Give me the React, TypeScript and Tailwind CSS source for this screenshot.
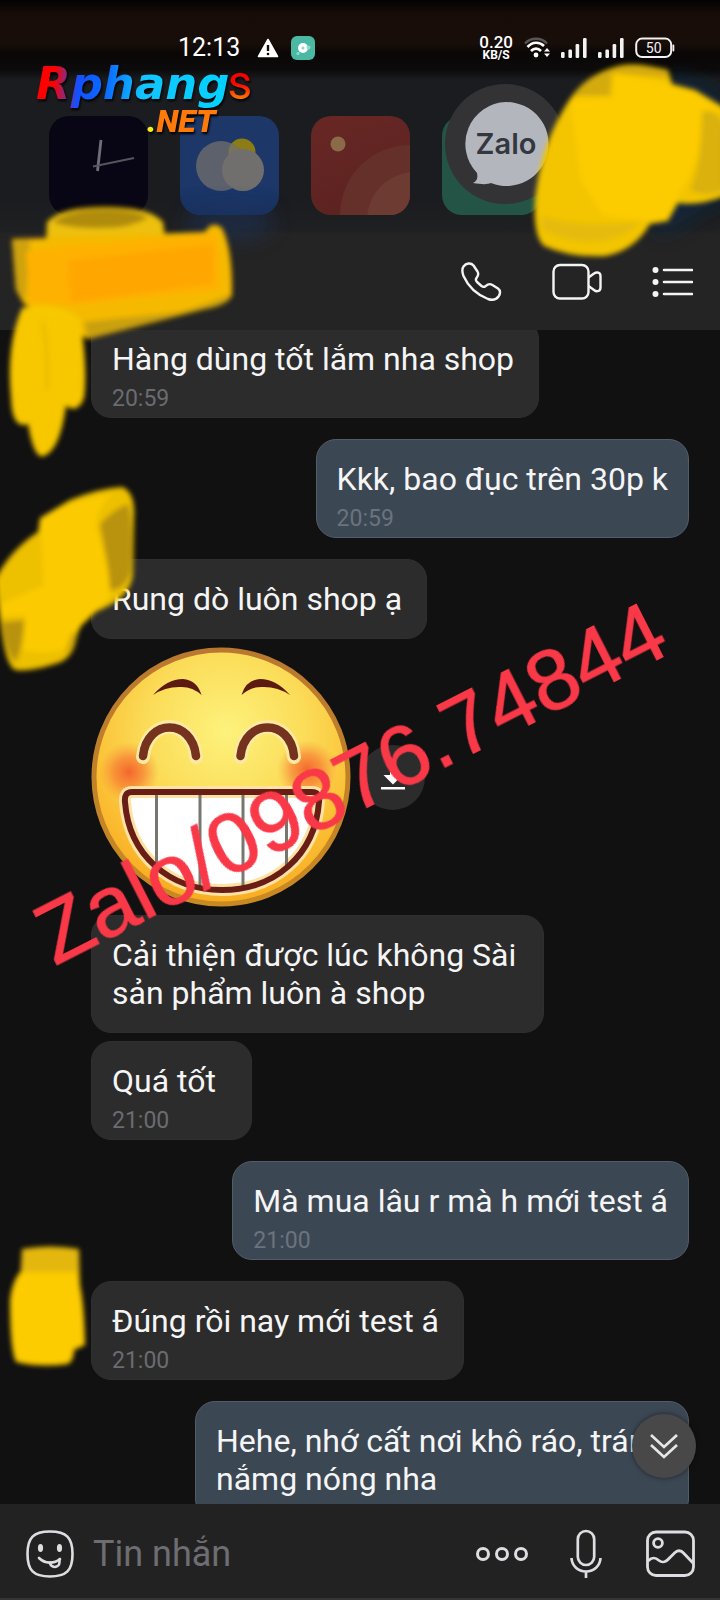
import React from "react";

type Message = {
  id: number;
  mine?: boolean;
  text?: string;
  time?: string;
  sticker?: boolean;
  tight?: boolean;
};

const messages: Message[] = [
  { id: 1, text: "Hàng dùng tốt lắm nha shop", time: "20:59" },
  { id: 2, mine: true, text: "Kkk, bao đục trên 30p k", time: "20:59" },
  { id: 3, text: "Rung dò luôn shop ạ" },
  { id: 4, sticker: true, tight: true },
  { id: 5, text: "Cải thiện được lúc không Sài sản phẩm luôn à shop", tight: true },
  { id: 6, text: "Quá tốt", time: "21:00", tight: true },
  { id: 7, mine: true, text: "Mà mua lâu r mà h mới test á", time: "21:00" },
  { id: 8, text: "Đúng rồi nay mới test á", time: "21:00" },
  { id: 9, mine: true, text: "Hehe, nhớ cất nơi khô ráo, tránh nắmg nóng nha" },
];

function Signal() {
  return (
    <svg width="26" height="22" viewBox="0 0 26 22" fill="#f2f2f2" aria-hidden="true">
      <rect x="0" y="15" width="3.6" height="6" rx="1.2" />
      <rect x="7.4" y="12.5" width="3.6" height="8.5" rx="1.2" />
      <rect x="14.6" y="7" width="3.6" height="14" rx="1.2" />
      <rect x="22" y="1" width="3.6" height="20" rx="1.2" />
    </svg>
  );
}

function StatusBar() {
  return (
    <div className="flex items-center justify-between pt-9 pr-[45px] pl-[178px]">
      <div className="flex h-6 items-center">
        <span className="text-[25px] leading-6 text-white">12:13</span>
        <svg className="ml-[17px]" width="22" height="20" viewBox="0 0 22 20" aria-hidden="true">
          <path d="M11 1.5 L20.5 18.5 H1.5Z" fill="#fff" stroke="#fff" strokeWidth="1.6" strokeLinejoin="round" />
          <path d="M11 7v6" stroke="#120b09" strokeWidth="2.4" />
          <circle cx="11" cy="16" r="1.3" fill="#120b09" />
        </svg>
        <svg className="ml-[12px]" width="24" height="24" viewBox="0 0 24 24" aria-hidden="true">
          <rect width="24" height="24" rx="6" fill="#4bb8a4" />
          <circle cx="12" cy="12" r="5" fill="#fff" />
          <circle cx="17.5" cy="11.5" r="2" fill="#8fdccf" />
          <circle cx="7" cy="17.5" r="1.6" fill="#8fdccf" />
          <circle cx="12" cy="12" r="1.5" fill="#a8c8c2" />
        </svg>
      </div>
      <div className="flex h-6 items-center gap-[11px]">
        <div className="flex flex-col items-center text-white">
          <span className="text-[17px] leading-[13px] font-medium">0.20</span>
          <span className="text-[12px] leading-[12px] font-bold">KB/S</span>
        </div>
        <svg width="26" height="22" viewBox="0 0 26 22" fill="none" aria-hidden="true">
          <path d="M1 6.5C7 .2 17 .2 23 6.5" stroke="#555" strokeWidth="2.4" />
          <path d="M3.5 10C8.500 4.600 15.500 4.600 20 9" stroke="#fff" strokeWidth="2.6" />
          <path d="M7 14C10 10.800 14 10.800 17 14" stroke="#fff" strokeWidth="2.6" />
          <circle cx="12" cy="18" r="2.4" fill="#fff" />
          <path d="M20 14.500l3-3.500 3 3.500zM20 16.500l3 3.500 3-3.500z" fill="#fff" />
        </svg>
        <Signal />
        <Signal />
        <svg width="40" height="22" viewBox="0 0 40 22" fill="none" aria-hidden="true">
          <rect x="1.200" y="1.600" width="35" height="18.500" rx="6" stroke="#f2f2f2" strokeWidth="2" />
          <rect x="37.500" y="7.500" width="1.800" height="7" rx="0.900" fill="#f2f2f2" />
          <text x="18.700" y="16" textAnchor="middle" fontSize="14" fill="#f2f2f2" fontFamily="Roboto, sans-serif">
            50
          </text>
        </svg>
      </div>
    </div>
  );
}

function HomeIcons() {
  return (
    <div className="flex gap-8 pt-[56px] pl-[49px]">
      <svg className="shrink-0" width="99" height="99" viewBox="0 0 99 99" aria-hidden="true">
        <rect width="99" height="99" rx="20" fill="#080614" />
        <path d="M52 24L48.500 55" stroke="#6f6f76" strokeWidth="2.800" />
        <path d="M44 50.500L85 42" stroke="#55555c" strokeWidth="2" />
      </svg>
      <svg className="shrink-0" width="99" height="99" viewBox="0 0 99 99" aria-hidden="true">
        <defs>
          <linearGradient id="weather" x1="0" y1="0" x2="0" y2="1">
            <stop offset="0.700" stopColor="#1c3768" />
            <stop offset="1" stopColor="#18305e" />
          </linearGradient>
          <clipPath id="sunTile">
            <circle cx="41" cy="50" r="25" />
          </clipPath>
        </defs>
        <rect width="99" height="99" rx="20" fill="url(#weather)" />
        <circle cx="62" cy="36" r="13.500" fill="#8c7c16" />
        <circle cx="41" cy="50" r="25" fill="#5d616c" />
        <circle cx="62" cy="36" r="13.500" fill="#77745a" clipPath="url(#sunTile)" />
        <circle cx="63" cy="54" r="21" fill="#706f6d" />
      </svg>
      <svg className="shrink-0" width="99" height="99" viewBox="0 0 99 99" aria-hidden="true">
        <defs>
          <clipPath id="redTile">
            <rect width="99" height="99" rx="20" />
          </clipPath>
          <linearGradient id="redFill" x1="0" y1="0" x2="0.400" y2="1">
            <stop offset="0" stopColor="#682725" />
            <stop offset="1" stopColor="#5c2320" />
          </linearGradient>
        </defs>
        <g clipPath="url(#redTile)">
          <rect width="99" height="99" fill="url(#redFill)" />
          <circle cx="99" cy="99" r="70" fill="#652f2a" />
          <circle cx="104" cy="104" r="48" fill="#6e3b33" />
          <circle cx="27" cy="28" r="7.500" fill="#8a6a47" />
        </g>
      </svg>
      <svg className="shrink-0" width="99" height="99" viewBox="0 0 99 99" aria-hidden="true">
        <rect width="99" height="99" rx="20" fill="#245446" />
      </svg>
    </div>
  );
}

function Logo() {
  return (
    <div className="absolute top-[56px] left-[36px] leading-none [filter:drop-shadow(1px_2px_1px_#000)]">
      <div className="flex items-baseline">
        <span className="bg-[linear-gradient(95deg,#f00_0%,#f00_10%,#1450ff_22%,#0a6cff_36%,#12c4ff_54%,#00d4ff_100%)] bg-clip-text pr-1 font-['DejaVu_Sans',sans-serif] text-[45px] leading-[54px] font-bold text-transparent italic">
          Rphang
        </span>
        <span className="-ml-1.5 bg-[linear-gradient(180deg,#f00_50%,#ff7a00_80%)] bg-clip-text text-[48px] leading-[54px] text-transparent">s</span>
      </div>
      <div className="-mt-1.5 ml-[111px] text-[32px] leading-8 font-black text-[#ff7a0a] italic">
        <span className="text-[#f6f01a]">.</span>NET
      </div>
    </div>
  );
}

function ChatHead() {
  return (
    <svg className="absolute top-[80px] left-[444px]" width="124" height="128" viewBox="0 0 124 128" role="img" aria-label="Zalo">
      <circle cx="61" cy="64" r="60" fill="#333335" />
      <path d="M62 22a42 42 0 1 1-15 81c-4 1.500-9 1.500-18 0 4-2 5-5 4-10A42 42 0 0 1 62 22z" fill="#b3b7bd" />
      <text x="62" y="74" textAnchor="middle" fontSize="29" fontWeight="600" fill="#333740" fontFamily="Inter, sans-serif">
        Zalo
      </text>
    </svg>
  );
}

function ChatHeader() {
  return (
    <header className="flex h-24 shrink-0 items-center justify-end gap-[50px] bg-[#242424] pr-[27px]">
      <button type="button" aria-label="Gọi thoại">
        <svg width="42" height="42" viewBox="0 0 42 42" fill="none" stroke="#f4f4f4" strokeWidth="2.400" strokeLinejoin="round">
          <path d="M3.500 5.500C6 2 11 1.500 13.500 4.500L17.500 10.500C19 13 18.500 14.500 16.500 17C15.500 18.500 15.500 19.500 17 21L21.500 25C23 26.200 24 26.200 25.500 25.200C28 23 30 22.500 32 23.800L38 27.500C40.500 29.500 40.500 32.500 38.500 35.500C36 39 32.500 39.500 28 38C16.500 33.500 8 25 3.500 15C2 11 1.800 8 3.500 5.500Z" />
        </svg>
      </button>
      <button type="button" aria-label="Gọi video">
        <svg width="50" height="38" viewBox="0 0 50 38" fill="none" stroke="#f4f4f4" strokeWidth="2.400" strokeLinejoin="round">
          <rect x="1.500" y="2" width="35" height="33.500" rx="6.500" />
          <path d="M36.500 14.500L42 10.500C45 8.500 48.500 9.500 48.500 13V24.500C48.500 28 45 29.500 42 27L36.500 23" />
        </svg>
      </button>
      <button type="button" aria-label="Tùy chọn">
        <svg width="41" height="32" viewBox="0 0 41 32" fill="#f4f4f4">
          <circle cx="3.500" cy="4" r="3" />
          <circle cx="3.500" cy="16" r="3" />
          <circle cx="3.500" cy="28" r="3" />
          <path d="M12 4h28M12 16h28M12 28h28" stroke="#f4f4f4" strokeWidth="2.600" strokeLinecap="round" />
        </svg>
      </button>
    </header>
  );
}

function GrinSticker() {
  return (
    <svg className="shrink-0" width="260" height="260" viewBox="0 0 260 260" fill="none" role="img" aria-label="Cười">
      <defs>
        <radialGradient id="face" cx="0.520" cy="0.320" r="0.700">
          <stop offset="0" stopColor="#fdf27c" />
          <stop offset="0.450" stopColor="#fbdc58" />
          <stop offset="0.750" stopColor="#fbc136" />
          <stop offset="1" stopColor="#f9a81e" />
        </radialGradient>
        <radialGradient id="cheek">
          <stop offset="0" stopColor="#f4602c" stopOpacity="0.950" />
          <stop offset="0.500" stopColor="#f66e30" stopOpacity="0.600" />
          <stop offset="1" stopColor="#f88a3a" stopOpacity="0" />
        </radialGradient>
        <linearGradient id="rim" x1="0" y1="0" x2="0" y2="1">
          <stop offset="0" stopColor="#b9782f" />
          <stop offset="1" stopColor="#c98a22" />
        </linearGradient>
        <clipPath id="teeth">
          <path d="M41 145H221Q229 145 228 155C224 208 184 243 131 243C78 243 38 208 34 155Q33 145 41 145Z" />
        </clipPath>
      </defs>
      <circle cx="130" cy="130" r="127" fill="url(#face)" stroke="url(#rim)" strokeWidth="5" />
      <circle cx="38" cy="125" r="30" fill="url(#cheek)" />
      <circle cx="216" cy="123" r="30" fill="url(#cheek)" />
      <path d="M62 48Q76 32 92 32Q106 33 110.500 48Q101 39 88 40Q74 40 62 48Z" fill="#5c1a10" />
      <path d="M199 48Q185 32 169 32Q155 33 150.500 48Q160 39 173 40Q187 40 199 48Z" fill="#5c1a10" />
      <g strokeLinecap="round">
        <path d="M52 110C56 70 101 70 105 110M149.500 110C153.500 70 199.500 70 203 110" stroke="#fde9a0" strokeWidth="14" />
        <path d="M52 109C56 71 101 71 105 109M149.500 109C153.500 71 199.500 71 203 109" stroke="#74321f" strokeWidth="8.500" />
      </g>
      <path d="M41 145H221Q229 145 228 155C224 208 184 243 131 243C78 243 38 208 34 155Q33 145 41 145Z" fill="#fff" stroke="#fde2a4" strokeWidth="12" />
      <g clipPath="url(#teeth)">
        <path d="M65.500 140v110M109 140v110M152 140v110M195.500 140v110" stroke="#77776f" strokeWidth="3" />
      </g>
      <path d="M41 145H221Q229 145 228 155C224 208 184 243 131 243C78 243 38 208 34 155Q33 145 41 145Z" stroke="#681e17" strokeWidth="6" />
    </svg>
  );
}

function Bubble({ message }: { message: Message }) {
  const tone = message.mine
    ? "max-w-[494px] border-[#525d69] bg-[#3c4754] pr-5"
    : "max-w-[453px] border-[#2f2f2f] bg-[#2c2c2c] pr-[22px]";
  return (
    <div className={`min-w-[161px] rounded-[20px] border pt-5 pl-5 ${message.time ? "pb-[5px]" : "pb-5"} ${tone}`}>
      <p className={`text-[32px] leading-[38px] text-[#f5f5f5] ${message.mine ? "" : "-mr-0.5 pr-1"}`}>{message.text}</p>
      {message.time && (
        <time className={`mt-[7px] block text-[23px] leading-[27px] ${message.mine ? "text-[#6a737e]" : "text-[#6b6b70]"}`}>{message.time}</time>
      )}
    </div>
  );
}

function MessageList() {
  return (
    <main className="min-h-0 flex-1 overflow-hidden bg-[#111] pr-[31px] pl-[91px]">
      <div className="-mt-8">
        {messages.map((m) => (
          <div key={m.id} className={`flex ${m.tight ? "mt-2" : "mt-[21px]"} ${m.mine ? "justify-end" : "justify-start"}`}>
            {m.sticker ? (
              <div className="flex items-center gap-[9px]">
                <GrinSticker />
                <button type="button" aria-label="Tải xuống" className="flex size-[65px] items-center justify-center rounded-full bg-[#2c2c2c]">
                  <svg width="26" height="28" viewBox="0 0 26 28" fill="#fff">
                    <path d="M10 3h6v9h6.500L13 21.500 3.500 12H10zM1 24h24v2.400H1z" />
                  </svg>
                </button>
              </div>
            ) : (
              <Bubble message={m} />
            )}
          </div>
        ))}
      </div>
    </main>
  );
}

function Composer() {
  return (
    <footer className="relative flex h-24 shrink-0 items-center border-b-2 border-[#353535] bg-[#222] pt-1.5 pr-[25px] pl-[26px]">
      <button type="button" aria-label="Nhãn dán">
        <svg width="48" height="48" viewBox="0 0 48 48" fill="none" stroke="#dedee2" strokeWidth="2.600">
          <path d="M24 1.500C40.500 1.500 46.500 7.500 46.500 24S40.500 46.500 24 46.500 1.500 40.500 1.500 24 7.500 1.500 24 1.500Z" />
          <ellipse cx="14.500" cy="18" rx="2.600" ry="4" fill="#dedee2" stroke="none" />
          <ellipse cx="33.500" cy="18" rx="2.600" ry="4" fill="#dedee2" stroke="none" />
          <path d="M13 28C19 34 28 34 34 29" strokeLinecap="round" />
          <path d="M24 32.500C24 38.500 33.500 38.500 33.500 32V29.500" strokeLinecap="round" />
        </svg>
      </button>
      <input
        type="text"
        aria-label="Tin nhắn"
        placeholder="Tin nhắn"
        className="ml-[19px] min-w-0 flex-1 bg-transparent text-[36px] text-white outline-none placeholder:text-[#6d6d72]"
      />
      <button type="button" aria-label="Thêm">
        <svg width="53" height="16" viewBox="0 0 53 16" fill="none" stroke="#dedee2" strokeWidth="3">
          <circle cx="7" cy="8" r="5.500" />
          <circle cx="26" cy="8" r="5.500" />
          <circle cx="45" cy="8" r="5.500" />
        </svg>
      </button>
      <button type="button" aria-label="Ghi âm" className="ml-[41px]">
        <svg width="32" height="50" viewBox="0 0 32 50" fill="none" stroke="#dedee2" strokeWidth="2.700">
          <rect x="7.800" y="2" width="16.400" height="34" rx="8.200" />
          <path d="M1.500 29C2 37 8 42.500 16 42.500S30 37 30.500 29M16 42.500V49" />
        </svg>
      </button>
      <button type="button" aria-label="Ảnh" className="ml-[44px]">
        <svg width="49" height="48" viewBox="0 0 49 48" fill="none" stroke="#dedee2" strokeWidth="2.800">
          <rect x="1.500" y="2" width="46" height="43.500" rx="8.500" />
          <circle cx="12" cy="13" r="4.400" />
          <path d="M2 31C6 27 9 27 13 30.500C17 33.500 20 32 24 27.500L29 22.500C32 20 35 20 38 23.500L47 33" />
        </svg>
      </button>
      <button
        type="button"
        aria-label="Xuống cuối"
        className="absolute right-6 bottom-[120px] flex size-16 items-center justify-center rounded-full bg-[#484848] shadow-[0_0_5px_rgba(0,0,0,0.5)]"
      >
        <svg width="30" height="28" viewBox="0 0 30 28" fill="none" stroke="#e6e6e6" strokeWidth="2.700">
          <path d="M2 3l13 12L28 3M2 13l13 12 13-12" />
        </svg>
      </button>
    </footer>
  );
}

function MarkerStrokes() {
  return (
    <svg className="pointer-events-none absolute top-0 left-0" width="720" height="1600" viewBox="0 0 720 1600" aria-hidden="true">
      <defs>
        <filter id="soft" x="-10%" y="-10%" width="120%" height="120%">
          <feGaussianBlur stdDeviation="2.800" />
        </filter>
        <filter id="halo" x="-50%" y="-50%" width="200%" height="200%">
          <feGaussianBlur stdDeviation="10" />
        </filter>
      </defs>

      <path d="M670 75L700 85L735 110V190L660 235L645 200Z" fill="#0b2c4a" opacity="0.700" filter="url(#halo)" />
      <ellipse cx="230" cy="222" rx="44" ry="18" fill="#1d3560" opacity="0.500" filter="url(#halo)" />

      <g filter="url(#soft)">
        <path d="M612 68Q630 60 668 70L672 84L695 90L725 108V196Q700 206 678 203L668 221L650 224Q635 250 606 256Q570 258 544 246Q533 236 535 200Q540 150 562 112Q580 78 612 68Z" fill="#f3c504" />
        <path d="M612 68Q635 62 668 70V78L612 73L610 96L572 96Q588 74 612 70Z" fill="#d4ab0c" />
        <path d="M700 110Q725 108 725 140V190Q705 198 690 190Q705 155 700 110Z" fill="#c9a410" opacity="0.600" />
        <path d="M614 74Q650 76 695 92L725 112Q706 110 702 112Q702 160 682 190L665 220Q630 222 602 215L580 180L570 100Q590 96 612 97Z" fill="#fccb04" />
        <path d="M542 216Q580 228 640 222Q625 240 590 242Q560 240 542 230Z" fill="#e0b60a" opacity="0.700" />

        <path d="M47 222Q60 207 105 207Q150 207 163 222L166 245H46Z" fill="#edc007" />
        <path d="M53 222Q70 209 105 209Q135 209 148 218Q130 228 105 228Q70 229 53 222Z" fill="#b08c0c" />
        <path d="M12 239L50 238L205 232Q212 220 222 228Q233 250 232 295Q228 305 205 309L88 339L24 304L16 290Z" fill="#f5b906" />
        <path d="M12 240L30 240L26 300L16 290Z" fill="#cfa30c" />
        <path d="M26 252L70 246L215 234Q222 260 218 290L70 305L30 302Z" fill="#ffb103" />
        <path d="M68 260L214 244L214 284L70 303Z" fill="#ffa702" />
        <path d="M84 322L180 312Q220 300 230 294Q228 305 205 309L88 339Z" fill="#c9a010" />
        <path d="M22 308Q55 300 80 318Q88 370 84 398Q78 414 66 406Q60 450 44 456Q34 460 28 424Q12 430 11 398Q6 345 22 308Z" fill="#f7c805" />
        <path d="M43 322Q49 360 47 390" stroke="#dcb008" strokeWidth="2" fill="none" />

        <path d="M70 500Q100 488 122 487Q136 492 134 520L133 575Q130 600 92 613Q80 622 76 640Q72 660 55 664Q30 672 15 670Q5 665 0 620L-5 580Q10 550 38 532L40 518Z" fill="#edc006" />
        <path d="M100 524Q115 508 128 504Q134 520 131 572Q125 590 110 590Q106 555 100 524Z" fill="#b9930e" />
        <path d="M2 622L24 620Q24 645 16 662Q5 655 2 622Z" fill="#b9930e" />
        <path d="M58 640Q62 628 76 634Q72 652 64 652Z" fill="#c79f0c" />
        <path d="M40 520Q60 502 112 494Q95 510 97 530Q110 560 110 598Q90 618 72 634L66 650Q40 655 22 650L26 615L0 616V604L44 585Z" fill="#fbca04" />

        <path d="M22 1249Q50 1244 79 1249L80 1285L20 1285Z" fill="#e3b70a" />
        <path d="M20 1272L76 1272Q84 1290 85 1345L74 1350Q74 1360 68 1364Q40 1368 16 1362Q10 1350 10 1300Q12 1282 20 1272Z" fill="#fccb04" />
      </g>
    </svg>
  );
}

export default function App() {
  return (
    <div className="relative flex h-screen min-w-0 flex-col overflow-hidden bg-[#111] font-['Roboto','Noto_Sans',sans-serif]">
      <section className="relative h-[234px] shrink-0 bg-[linear-gradient(180deg,#030202_0,#180c08_14px,#170d09_44px,#0a0606_54px,#0c0b0b_70px,#1a1c1f_80px,#1b1c1f_200px,#1f2022_230px,#242424_234px)]">
        <StatusBar />
        <HomeIcons />
        <ChatHead />
        <Logo />
      </section>
      <ChatHeader />
      <MessageList />
      <Composer />
      <MarkerStrokes />
      <div className="pointer-events-none absolute top-[740px] left-1/2 -ml-2.5 -translate-x-1/2 -rotate-27 font-['Liberation_Sans',Arial,sans-serif] text-[86px] leading-[84px] whitespace-nowrap text-[#f93848] [-webkit-text-stroke:1px_#f93848]">
        Zalo/09876.74844
      </div>
    </div>
  );
}
